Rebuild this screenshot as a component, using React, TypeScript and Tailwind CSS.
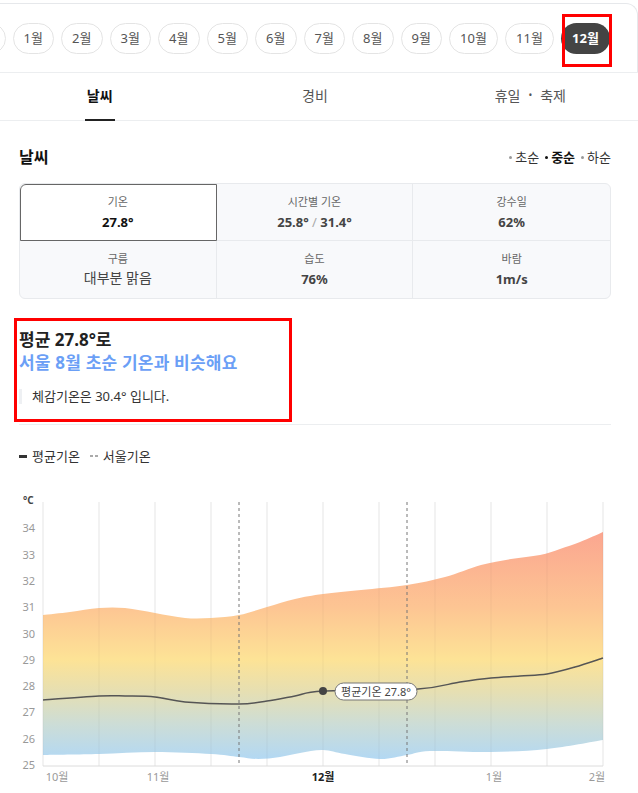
import React from 'react';

const MONTHS = ['', '1월', '2월', '3월', '4월', '5월', '6월', '7월', '8월', '9월', '10월', '11월', '12월'];

const TABLE = [
  { label: '기온', value: '27.8°', selected: true },
  { label: '시간별 기온', value: 'range' },
  { label: '강수일', value: '62%' },
  { label: '구름', value: '대부분 맑음', light: true },
  { label: '습도', value: '76%' },
  { label: '바람', value: '1m/s' },
];

type Pt = [number, number];

// catmull-rom -> cubic bezier
function smooth(pts: Pt[], move = true) {
  let d = `${move ? 'M' : 'L'}${pts[0][0]},${pts[0][1]}`;
  for (let i = 0; i < pts.length - 1; i++) {
    const p0 = pts[i - 1] || pts[i];
    const p1 = pts[i];
    const p2 = pts[i + 1];
    const p3 = pts[i + 2] || p2;
    const c1x = p1[0] + (p2[0] - p0[0]) / 6;
    const c1y = p1[1] + (p2[1] - p0[1]) / 6;
    const c2x = p2[0] - (p3[0] - p1[0]) / 6;
    const c2y = p2[1] - (p3[1] - p1[1]) / 6;
    d += ` C${c1x.toFixed(1)},${c1y.toFixed(1)} ${c2x.toFixed(1)},${c2y.toFixed(1)} ${p2[0]},${p2[1]}`;
  }
  return d;
}

const UPPER: Pt[] = [
  [43, 613], [70, 610], [99, 606], [125, 606], [155, 611], [185, 616], [211, 616], [239, 613],
  [267, 605], [295, 597], [323, 592], [361, 588], [407, 583], [445, 575], [481, 563], [511, 557],
  [540, 553], [560, 547], [580, 540], [603, 530],
];
const LOWER: Pt[] = [
  [43, 753], [99, 752], [155, 750], [211, 752], [239, 755], [258, 757], [280, 755], [300, 751],
  [323, 748], [345, 752], [380, 757], [407, 753], [430, 749], [491, 750], [547, 747], [603, 738],
];
const MEAN: Pt[] = [
  [43, 698], [99, 694], [125, 694], [155, 695], [185, 700], [239, 702], [267, 699], [295, 694],
  [323, 689], [418, 687], [460, 680], [491, 676], [520, 674], [547, 672], [575, 665], [603, 656],
];

const Y_TICKS = [34, 33, 32, 31, 30, 29, 28, 27, 26, 25];
const X_LABELS = [
  { x: 57, t: '10월' },
  { x: 158, t: '11월' },
  { x: 323, t: '12월', bold: true },
  { x: 494, t: '1월' },
  { x: 597, t: '2월' },
];

function Chart() {
  const band = smooth(UPPER) + ' ' + smooth([...LOWER].reverse(), false) + ' Z';
  const yOf = (v: number) => 763 - (v - 25) * 26.3;
  return (
    <svg width={638} height={308} viewBox="0 485 638 308" className="block">
      <defs>
        <linearGradient id="band" gradientUnits="userSpaceOnUse" x1="0" y1="530" x2="0" y2="758">
          <stop offset="0" stopColor="#fba690" />
          <stop offset="0.33" stopColor="#fdc593" />
          <stop offset="0.56" stopColor="#fde396" />
          <stop offset="0.7" stopColor="#e6dfb2" />
          <stop offset="0.84" stopColor="#cdddd6" />
          <stop offset="1" stopColor="#b2d8f4" />
        </linearGradient>
      </defs>
      {Array.from({ length: 11 }).map((_, i) => (
        <line key={i} x1={43 + i * 56} x2={43 + i * 56} y1={500} y2={764} stroke="#efefef" strokeWidth={1} />
      ))}
      <path d={band} fill="url(#band)" />
      {Array.from({ length: 11 }).map((_, i) => (
        <line key={'g' + i} x1={43 + i * 56} x2={43 + i * 56} y1={500} y2={764} stroke="#000" strokeOpacity={0.04} strokeWidth={1} />
      ))}
      <line x1={239} x2={239} y1={500} y2={764} stroke="#777" strokeWidth={1} strokeDasharray="3 3" />
      <line x1={407} x2={407} y1={500} y2={764} stroke="#777" strokeWidth={1} strokeDasharray="3 3" />
      <line x1={43} x2={603} y1={764} y2={764} stroke="#dcdcdc" strokeWidth={1} />
      <path d={smooth(MEAN)} fill="none" stroke="#555" strokeWidth={1.5} />
      <circle cx={323} cy={689} r={4} fill="#444" />
      <rect x={335} y={681} width={82} height={17} rx={8.5} fill="#fff" stroke="#777" strokeWidth={1} />
      <text x={376} y={693.5} textAnchor="middle" fontSize={11} fill="#444">평균기온 27.8°</text>
      <text x={23} y={502} fontSize={10} fill="#444" fontWeight={700}>°C</text>
      {Y_TICKS.map((v) => (
        <text key={v} x={35} y={yOf(v) + 4} textAnchor="end" fontSize={11} fill="#999">
          {v}
        </text>
      ))}
      {X_LABELS.map((l) => (
        <text
          key={l.t}
          x={l.x}
          y={779}
          textAnchor="middle"
          fontSize={11}
          fill={l.bold ? '#222' : '#999'}
          fontWeight={l.bold ? 700 : 400}
        >
          {l.t}
        </text>
      ))}
    </svg>
  );
}

export default function App() {
  return (
    <div className="relative w-[638px] h-[793px] overflow-hidden bg-white text-[#222] font-['Noto_Sans','Noto_Sans_CJK_KR',sans-serif]">
      {/* month strip */}
      <div className="mt-[3px] h-[69px] border-t border-r border-[#e6e8eb] rounded-tr-[12px] overflow-hidden flex items-center">
        <div className="flex items-center gap-[7px] ml-[-43.5px]">
          {MONTHS.map((m, i) => {
            const active = i === MONTHS.length - 1;
            return (
              <div
                key={i}
                className={`shrink-0 h-[31px] rounded-full flex items-center justify-center text-[13px] leading-none ${
                  m.length === 2 ? 'w-[41.5px]' : 'w-[49px]'
                } ${active ? 'bg-[#444] text-white font-bold' : 'border border-[#e4e4e4] text-[#555]'}`}
              >
                {m}
              </div>
            );
          })}
        </div>
      </div>
      <div className="h-px bg-[#eceef0]" />

      {/* tabs */}
      <div className="ml-[-8px] w-[646px] grid grid-cols-3 h-[48px] border-b border-[#eceef0]">
        <div className="relative flex items-center justify-center pb-[2px] text-[14px] font-bold text-[#111]">
          날씨
          <span className="absolute bottom-[-1px] left-1/2 -translate-x-1/2 w-[30px] h-[2px] bg-[#222]" />
        </div>
        <div className="flex items-center justify-center pb-[2px] text-[14px] text-[#555]">경비</div>
        <div className="flex items-center justify-center pb-[2px] text-[14px] text-[#555]">
          휴일<span className="mx-[8px] text-[10px]">•</span>축제
        </div>
      </div>

      <div className="pl-[19px] pr-[27px]">
        {/* heading */}
        <div className="mt-[26px] flex items-center justify-between">
          <h2 className="text-[16px] leading-[20px] font-bold text-[#111]">날씨</h2>
          <div className="flex items-center gap-[6px] text-[13px] leading-[18px] text-[#333]">
            <span className="flex items-center gap-[3px]">
              <span className="w-[3px] h-[3px] rounded-full bg-[#999]" />초순
            </span>
            <span className="flex items-center gap-[3px] font-bold text-[#111]">
              <span className="w-[3px] h-[3px] rounded-full bg-[#111]" />중순
            </span>
            <span className="flex items-center gap-[3px]">
              <span className="w-[3px] h-[3px] rounded-full bg-[#999]" />하순
            </span>
          </div>
        </div>

        {/* table */}
        <div className="mt-[16px] grid grid-cols-3 border border-[#e8eaed] rounded-[6px] overflow-hidden bg-[#f8f9fb]">
          {TABLE.map((c, i) => (
            <div
              key={c.label}
              className={`h-[57px] flex flex-col items-center justify-center ${i % 3 !== 2 ? 'border-r border-[#e8eaed]' : ''} ${
                i < 3 ? 'border-b border-[#e8eaed]' : ''
              } ${c.selected ? 'bg-white outline outline-1 outline-[#666] -outline-offset-1 rounded-tl-[6px]' : ''}`}
            >
              <div className="text-[11px] leading-[14px] text-[#666]">{c.label}</div>
              {c.value === 'range' ? (
                <div className="mt-[5px] text-[13px] leading-[16px] font-bold text-[#444]">
                  25.8° <span className="font-normal text-[#aaa]">/</span> 31.4°
                </div>
              ) : c.light ? (
                <div className="mt-[3px] text-[14px] leading-[18px] text-[#444]">{c.value}</div>
              ) : (
                <div className={`mt-[5px] text-[13px] leading-[16px] font-bold ${c.selected ? 'text-[#111]' : 'text-[#444]'}`}>
                  {c.value}
                </div>
              )}
            </div>
          ))}
        </div>

        {/* summary */}
        <div className="mt-[30px] text-[17px] leading-[22px] font-bold text-[#222]">평균 27.8°로</div>
        <div className="text-[17px] leading-[24px] font-bold tracking-[0.2px] text-[#6b9ff6]">서울 8월 초순 기온과 비슷해요</div>
        <div className="mt-[13px] flex items-center gap-[10px]">
          <span className="w-[3px] h-[15px] bg-[#eef0f3]" />
          <span className="text-[13px] leading-[16px] text-[#333]">체감기온은 30.4° 입니다.</span>
        </div>
        <div className="mt-[20px] h-px bg-[#eceef0]" />

        {/* legend */}
        <div className="mt-[23px] flex items-center text-[13px] leading-[16px] text-[#333]">
          <span className="w-[8px] h-[3px] bg-[#333] mr-[5px]" />
          평균기온
          <span className="ml-[10px] mr-[5px] flex gap-[2px]">
            <span className="w-[3px] h-[2px] bg-[#aaa]" />
            <span className="w-[3px] h-[2px] bg-[#aaa]" />
          </span>
          서울기온
        </div>
      </div>

      <div className="mt-[23px]">
        <Chart />
      </div>

      {/* annotation boxes */}
      <div className="absolute left-[562px] top-[14px] w-[50px] h-[53px] border-[3px] border-[#ff0000]" />
      <div className="absolute left-[14px] top-[318px] w-[278px] h-[104px] border-[3px] border-[#ff0000]" />
    </div>
  );
}
